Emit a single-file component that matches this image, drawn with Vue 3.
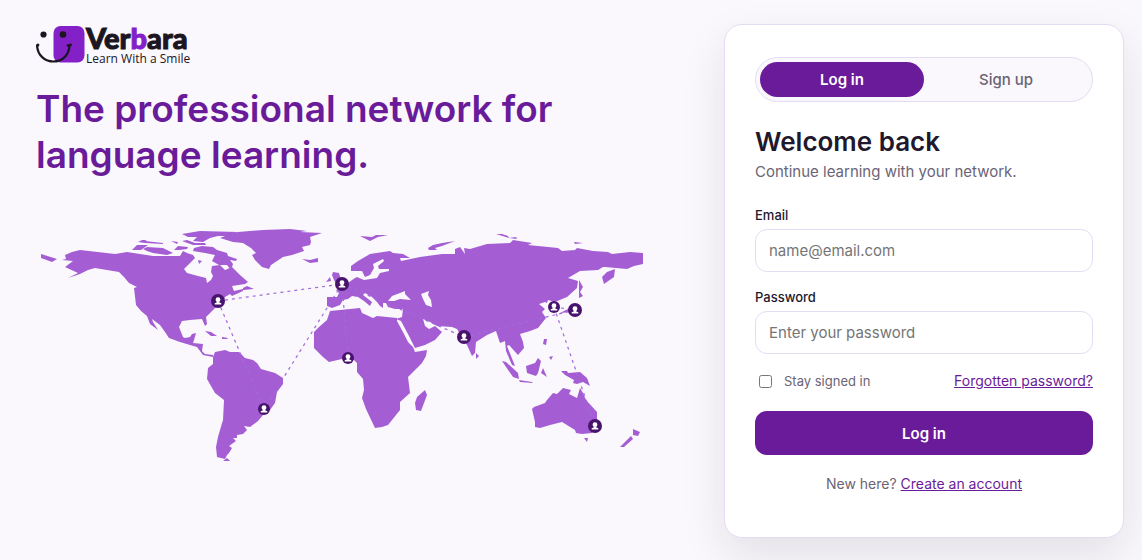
<template>
  <main class="page">
    <section class="intro">
      <!-- Logo -->
      <a href="#" class="logo" aria-label="Verbara">
        <svg class="logo-mark" viewBox="0 0 50 40" aria-hidden="true">
          <rect x="17.500" y="2" width="31" height="36.500" rx="7" fill="#8420c8" />
          <circle cx="7.500" cy="10.500" r="3.100" fill="#1b161f" />
          <circle cx="27" cy="10.500" r="3.300" fill="#1b161f" />
          <path d="M1 21 C2 43 33 43 33.500 21" fill="none" stroke="#1b161f" stroke-width="2.200" />
          <path d="M.8 21.800 L2 21 M32 21.500 L34.500 21" stroke="#1b161f" stroke-width="2.800" stroke-linecap="round" />
        </svg>
        <span class="logo-text">
          <span class="logo-name">Ver<span class="logo-accent">b</span>ara</span>
          <span class="logo-tagline">Learn With a Smile</span>
        </span>
      </a>

      <h1 class="headline">The professional network for language learning.</h1>

      <!-- World map -->
      <svg class="map" viewBox="36 224 612 242" role="img" aria-label="World map">
        <g class="land">
          <polygon v-for="(shape, i) in land" :key="i" :points="shape" />
        </g>
        <g class="water">
          <polygon v-for="(shape, i) in seas" :key="i" :points="shape" />
        </g>
        <g class="routes">
          <line
            v-for="(route, i) in routes"
            :key="i"
            :x1="pins[route[0]].x"
            :y1="pins[route[0]].y"
            :x2="pins[route[1]].x"
            :y2="pins[route[1]].y"
          />
        </g>
        <g v-for="(pin, i) in pins" :key="i" :transform="`translate(${pin.x} ${pin.y})`">
          <circle :r="pin.r" fill="#48136c" />
          <circle cy="-1.300" r="2.400" fill="#fff" />
          <path d="M-1.300 .5 H1.300 V1.400 L3.300 2.300 V3.500 H-3.300 V2.300 L-1.300 1.400 Z" fill="#fff" />
        </g>
      </svg>
    </section>

    <section class="card">
      <div class="tabs">
        <button
          v-for="tab in tabs"
          :key="tab"
          type="button"
          class="tab"
          :class="{ active: activeTab === tab }"
          @click="activeTab = tab"
        >
          {{ tab }}
        </button>
      </div>

      <h2 class="title">Welcome back</h2>
      <p class="subtitle">Continue learning with your network.</p>

      <form @submit.prevent>
        <!-- Email -->
        <div class="form-group">
          <label for="email" class="form-label">Email</label>
          <input id="email" v-model="form.email" type="email" class="form-input" placeholder="name@email.com">
        </div>

        <!-- Password -->
        <div class="form-group">
          <label for="password" class="form-label">Password</label>
          <input
            id="password"
            v-model="form.password"
            type="password"
            class="form-input"
            placeholder="Enter your password"
          >
        </div>

        <div class="options">
          <label class="remember">
            <input v-model="form.remember" type="checkbox">
            <span>Stay signed in</span>
          </label>
          <a href="#" class="link">Forgotten password?</a>
        </div>

        <button type="submit" class="submit">Log in</button>
      </form>

      <p class="signup">New here? <a href="#" class="link">Create an account</a></p>
    </section>
  </main>
</template>

<script setup>
import { ref, reactive } from 'vue'

const tabs = ['Log in', 'Sign up']
const activeTab = ref('Log in')

const form = reactive({
  email: '',
  password: '',
  remember: false
})

const pins = [
  { x: 218, y: 301, r: 7 },
  { x: 342, y: 284, r: 7 },
  { x: 264, y: 409, r: 6 },
  { x: 348, y: 358, r: 6 },
  { x: 464, y: 337, r: 7 },
  { x: 554, y: 307, r: 6 },
  { x: 575, y: 310, r: 7 },
  { x: 595, y: 426, r: 7 }
]

const routes = [[0, 1], [0, 2], [1, 2], [1, 3], [1, 4], [4, 6], [5, 6], [5, 7]]

const land = [
  // North America
  '62,260 66,259 65,255 72,252 80,250 115,254 127,252 153,256 180,256 183,251 187,253 193,255 195,258 188,265 184,269 187,273 198,276 206,278 207,283 211,280 213,276 211,272 212,266 220,265 225,270 232,267 240,275 248,282 245,284 232,286 234,291 243,289 243,291 232,296 230,294 225,297 223,302 215,308 206,317 207,324 205,326 202,319 190,320 182,321 179,327 183,337 185,338 190,337 192,334 196,333 194,340 193,343 203,344 202,351 205,354 213,355 213,357 203,355 197,347 190,345 180,342 169,338 165,332 160,325 152,319 153,322 158,330 150,324 147,316 141,311 136,305 134,288 137,287 129,283 124,277 119,272 107,270 95,268 88,270 80,274 68,278 78,273 65,267 73,261',
  '41,254 57,259 52,262 41,258',
  '132,250 137,245 148,245 141,250',
  '138,242 142,240 147,240 145,241 163,243 163,244 145,243',
  '143,249 147,247 163,248 173,253 167,255 153,253 147,251',
  '171,241 178,242 177,244',
  '174,250 178,246 188,247 187,249 179,250',
  '182,234 200,231 238,232 227,236 218,236 210,238 203,242 193,241 197,237 188,237',
  '182,241 187,240 195,243 205,243 206,245 193,245',
  '193,251 194,248 202,246 213,247 217,250 227,253 228,256 237,259 236,261 230,260 233,264 231,270 227,265 219,265 212,261 215,255 205,253',
  '198,260 202,261 199,264',
  '243,288 247,286 254,289 243,290',
  '205,331 211,332 217,336 211,336',
  '222,337 228,338 227,339 222,339',
  // Greenland and Iceland
  '220,238 230,234 238,232 263,230 290,229 307,231 300,232 322,233 310,237 311,242 310,245 302,247 304,251 292,255 283,257 277,261 271,265 269,269 262,267 255,260 252,255 256,253 251,248 243,243 233,242',
  '302,259 310,260 318,258 318,262 310,263',
  // South America
  '213,357 215,352 225,350 230,352 239,352 245,358 253,360 257,363 261,369 275,373 283,378 283,384 277,392 275,403 270,410 263,415 258,421 250,427 244,426 247,430 243,434 237,435 237,438 233,438 236,441 229,446 232,448 229,453 227,455 225,459 217,457 216,447 218,437 220,430 223,420 224,400 215,393 207,379 208,368 213,364',
  '223,461 227,458 230,461',
  // Africa
  '314,332 319,327 327,320 330,311 340,310 360,308 362,313 373,318 377,316 397,318 397,321 404,334 408,342 413,347 415,352 427,350 426,356 422,363 408,377 410,393 400,402 400,410 388,425 382,427 375,428 366,409 362,398 364,390 363,379 357,372 357,363 354,360 342,359 329,362 323,357 314,348',
  '425,390 427,395 421,411 416,410 415,403 417,397',
  // Eurasia
  '396,319 402,317 403,309 395,309 388,307 386,303 383,303 383,308 380,306 377,302 372,297 365,293 363,295 372,302 370,306 364,301 358,297 352,296 348,299 343,300 340,305 332,308 327,306 327,297 337,297 339,293 336,290 345,285 355,278 357,277 364,280 377,278 380,273 389,271 389,269 379,269 378,266 384,261 383,259 373,264 374,268 370,275 365,277 362,271 351,271 351,266 358,261 370,254 390,251 393,253 403,254 410,258 400,258 401,261 420,257 442,254 455,254 455,249 460,247 465,254 464,248 470,249 487,244 510,243 513,240 532,243 528,245 558,248 562,251 575,250 577,248 593,251 608,252 612,254 630,252 643,253 643,264 634,266 627,269 605,267 603,267 598,270 580,271 568,278 578,281 577,288 567,297 555,302 548,300 547,303 545,302 539,304 545,309 542,312 546,318 538,328 530,331 520,334 523,342 524,348 518,355 509,345 507,346 511,356 515,366 512,365 506,351 505,341 500,343 496,331 487,335 476,342 475,353 472,356 467,345 463,339 457,329 452,327 437,326 430,322 423,319 425,326 429,329 435,326 442,332 435,340 425,345 415,348 409,336 401,321',
  '332,275 333,272 339,273 341,280 347,284 338,287 334,280',
  '326,282 330,277 331,281',
  '360,236 372,237 376,235 388,235 378,237 370,241 364,238',
  '428,248 433,245 442,243 455,241 442,246 435,248 437,250 429,250',
  '496,234 502,234 508,236 509,238',
  '509,238 516,237 517,239',
  '574,242 583,243 575,244',
  '615,269 614,277 604,284 602,277 607,272',
  '579,280 583,287 580,292 583,296 579,298',
  '560,313 568,309 574,307 572,312',
  '476,353 479,356 476,359',
  // South-east Asia
  '544,339 547,339 546,345 543,344',
  '549,357 553,356 551,360',
  '502,361 506,362 518,373 519,379 513,377',
  '519,380 532,382 533,383 520,382',
  '526,366 535,363 538,358 541,361 538,373 536,376 527,373',
  '543,368 547,377 541,373',
  '561,371 567,371 568,373 580,372 587,378 590,386 583,382 577,384 573,383 574,380 565,375',
  // Australia and New Zealand
  '532,409 534,407 545,403 547,400 553,393 557,394 563,388 571,390 569,394 577,398 580,388 583,393 586,400 597,412 597,425 592,433 582,434 576,433 575,430 562,422 550,425 540,428 535,427 535,422',
  '584,438 588,438 587,442',
  '633,429 640,432 638,436 633,435',
  '631,436 633,439 624,447 620,447'
]

const seas = [
  // Black Sea
  '388,301 392,296 400,293 405,291 405,294 411,300 400,299 394,301',
  // Caspian Sea
  '421,294 429,291 428,295 431,300 432,307 426,305 423,299'
]
</script>

<style>
body {
  margin: 0;
  background: #faf8fc;
}
</style>

<style scoped>
.page {
  display: grid;
  grid-template-columns: minmax(0, 1fr) 400px;
  gap: 76px;
  min-height: 100vh;
  padding: 24px 18px 22px 36px;
  box-sizing: border-box;
  font-family: Inter, "Liberation Sans", sans-serif;
  color: #21182d;
}

.logo {
  display: flex;
  width: max-content;
  color: #1b161f;
  text-decoration: none;
}

.logo-mark {
  width: 50px;
  height: 40px;
}

.logo-text {
  display: flex;
  flex-direction: column;
}

.logo-name {
  font-family: Lato, sans-serif;
  font-size: 29px;
  font-weight: 900;
  line-height: 28px;
  -webkit-text-stroke: 1px currentColor;
}

.logo-accent {
  color: #8420c8;
}

.logo-tagline {
  font-family: "Open Sans", sans-serif;
  font-size: 12px;
  line-height: 14px;
}

.headline {
  max-width: 560px;
  margin: 20px 0 46px;
  font-size: 37px;
  font-weight: 600;
  line-height: 46px;
  color: #6a1b9a;
}

.map {
  display: block;
  width: 100%;
}

.land {
  fill: #a45dd3;
}

.water {
  fill: #faf8fc;
}

.routes {
  stroke: #a06bdd;
  stroke-width: 1.2;
  stroke-dasharray: 3 4;
}

.card {
  padding: 32px 30px;
  border: 1px solid #e4dcf3;
  border-radius: 18px;
  background: #fff;
  box-shadow: 0 18px 44px rgba(33, 24, 45, 0.1);
}

.tabs {
  display: flex;
  padding: 4px;
  border: 1px solid #e4dcf3;
  border-radius: 999px;
  background: #faf8fc;
}

.tab {
  flex: 1;
  height: 35px;
  border: 0;
  border-radius: 999px;
  background: transparent;
  font-family: inherit;
  font-size: 15px;
  font-weight: 500;
  color: #6b6475;
  cursor: pointer;
}

.tab.active {
  background: #6a1b9a;
  font-weight: 600;
  color: #fff;
}

.title {
  margin: 24px 0 0;
  font-size: 26px;
  font-weight: 600;
  line-height: 32px;
}

.subtitle {
  margin: 2px 0 22px;
  font-size: 15px;
  line-height: 24px;
  color: #6b6475;
}

.form-group {
  margin-bottom: 16px;
}

.form-label {
  display: block;
  margin-bottom: 5px;
  font-size: 13px;
  font-weight: 500;
  line-height: 18px;
}

.form-input {
  display: block;
  width: 100%;
  height: 43px;
  padding: 0 13px;
  box-sizing: border-box;
  border: 1px solid #e4dcf3;
  border-radius: 12px;
  background: #fff;
  font-family: inherit;
  font-size: 15px;
  color: #21182d;
}

.form-input:focus {
  outline: none;
  border-color: #6a1b9a;
}

.options {
  display: flex;
  justify-content: space-between;
  align-items: center;
  margin-bottom: 19px;
  line-height: 22px;
}

.remember {
  display: flex;
  align-items: center;
  gap: 12px;
  font-size: 13px;
  color: #6b6475;
}

.remember input {
  width: 13px;
  height: 13px;
  margin: 0 0 0 4px;
}

.link {
  font-size: 14px;
  color: #6a1b9a;
}

.submit {
  display: block;
  width: 100%;
  height: 44px;
  border: 0;
  border-radius: 12px;
  background: #6a1b9a;
  font-family: inherit;
  font-size: 15px;
  font-weight: 600;
  color: #fff;
  cursor: pointer;
}

.signup {
  margin: 18px 0 0;
  font-size: 14px;
  line-height: 22px;
  text-align: center;
  color: #6b6475;
}

@media (max-width: 900px) {
  .page {
    grid-template-columns: minmax(0, 1fr);
    gap: 24px;
    padding: 24px 18px;
  }
}
</style>
